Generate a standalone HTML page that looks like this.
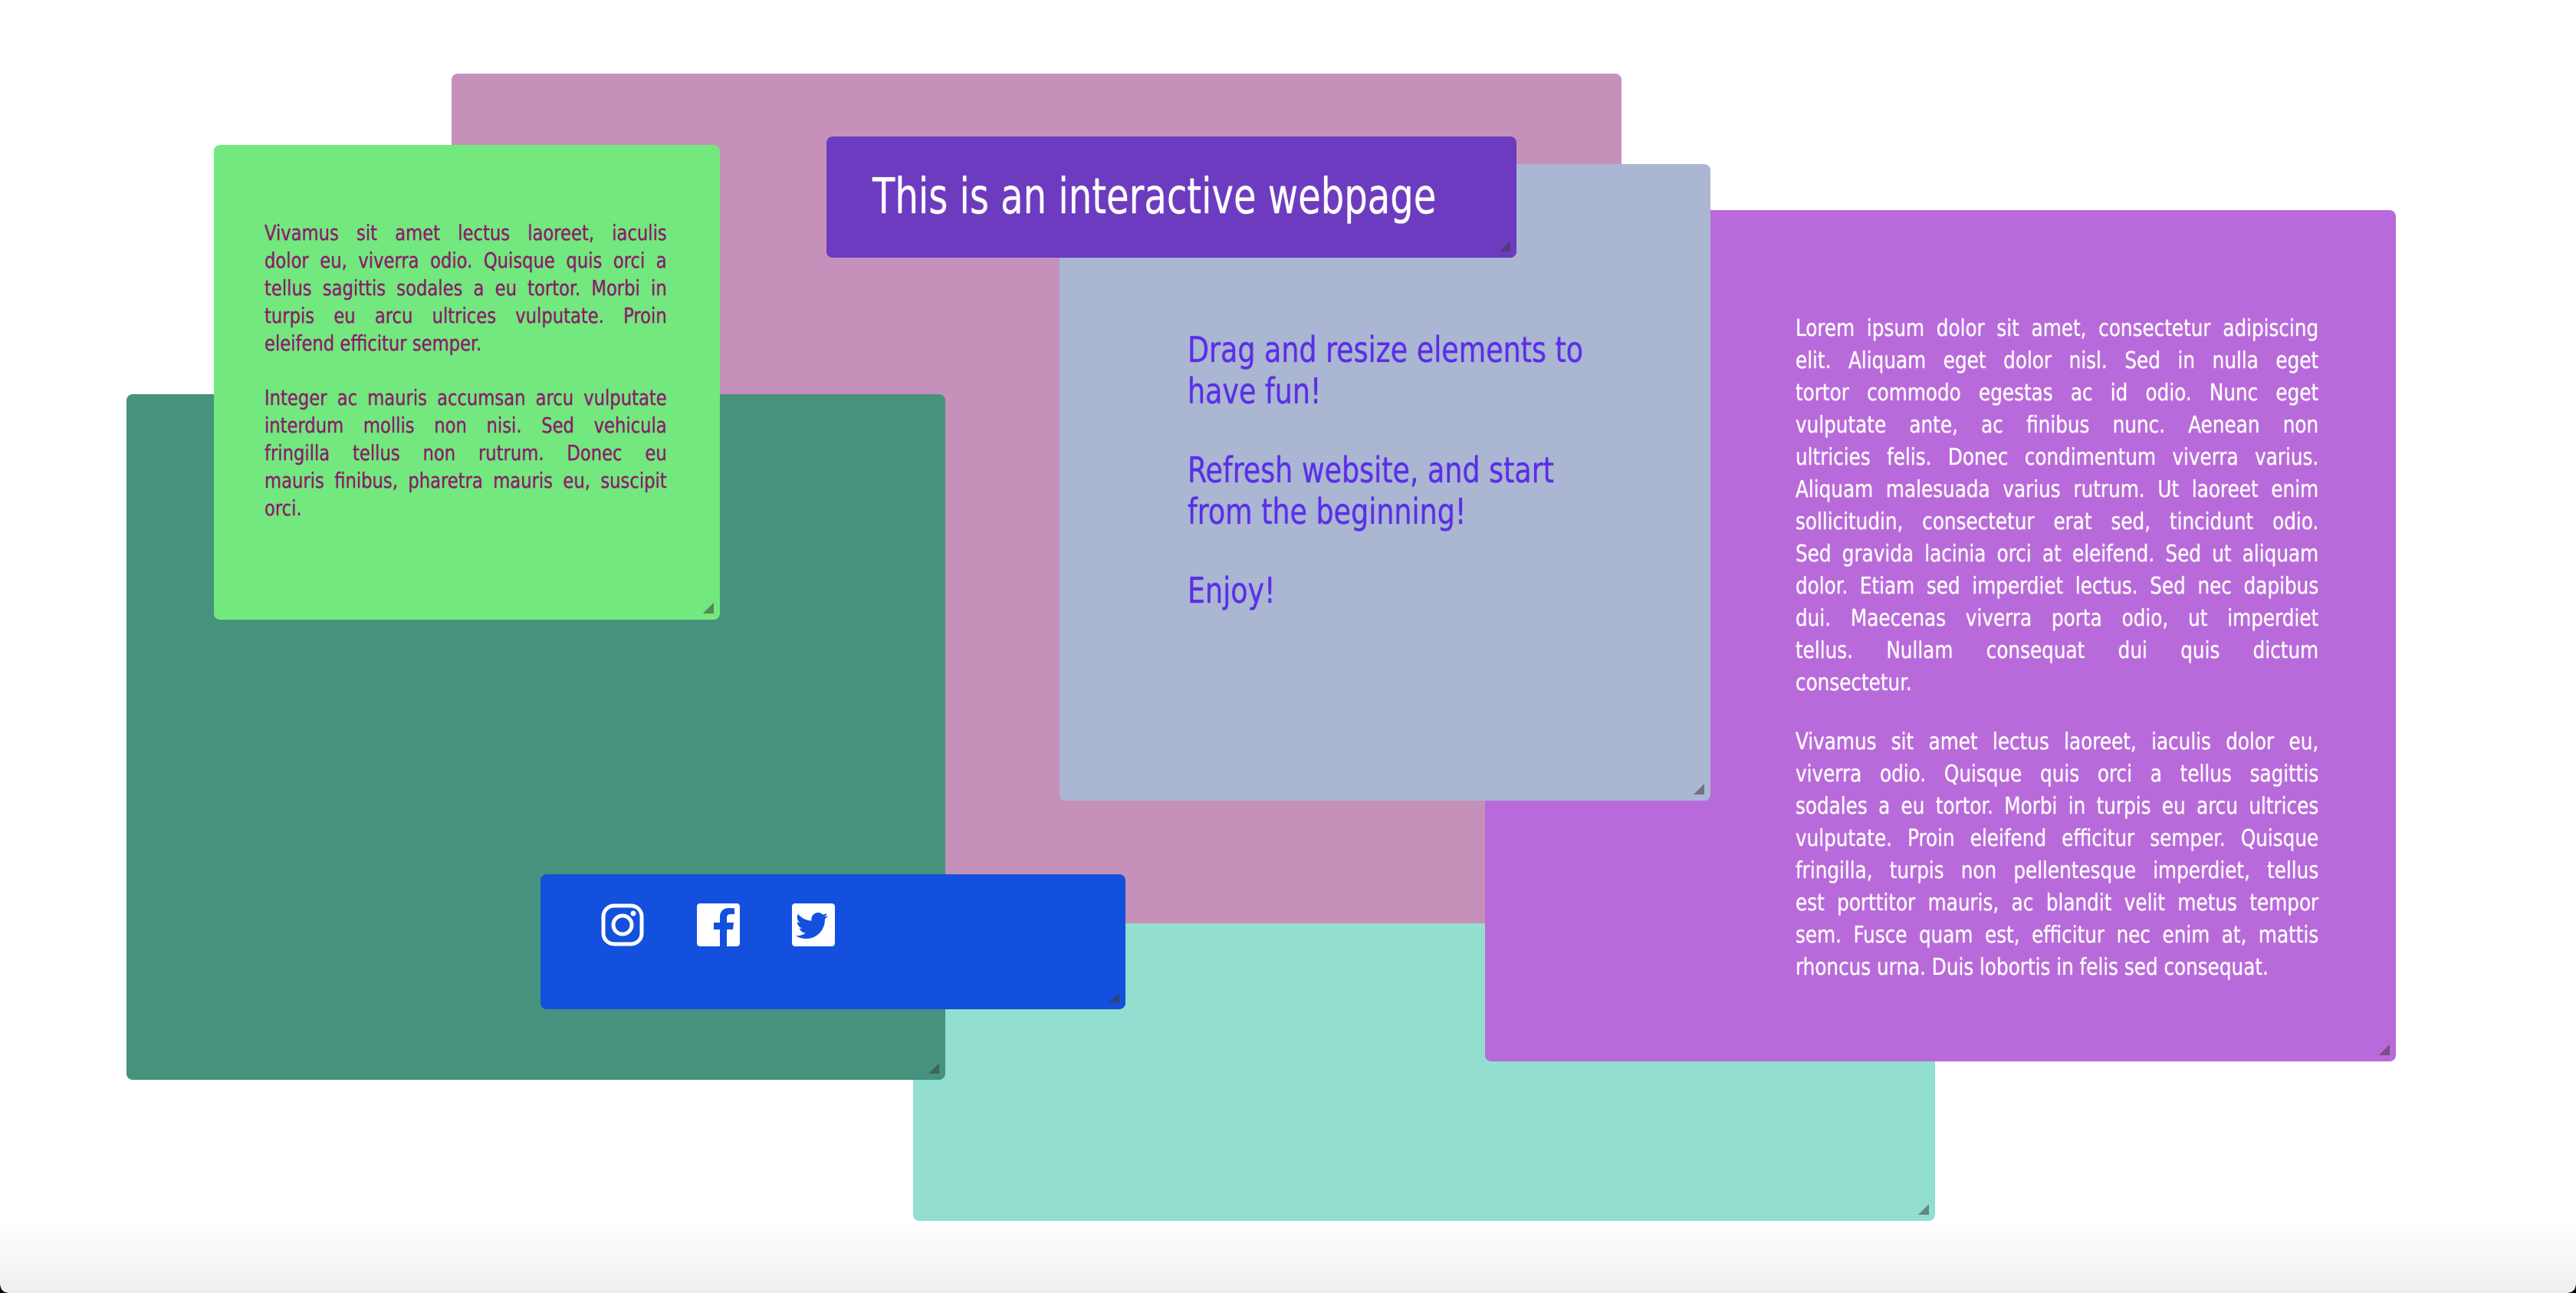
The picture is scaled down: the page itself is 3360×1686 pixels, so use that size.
<!DOCTYPE html>
<html><head><meta charset="utf-8">
<style>
html,body{margin:0;padding:0;width:3360px;height:1686px;overflow:hidden;}
body{background:#fff;position:relative;font-family:"Liberation Sans Narrow","DejaVu Sans Condensed","Liberation Sans",sans-serif;}
.b{position:absolute;border-radius:8px;}
.h{position:absolute;right:8px;bottom:8px;width:14px;height:14px;background:linear-gradient(135deg,transparent 50%,rgba(60,60,60,.55) 50%);}
.j{transform-origin:0 0;}
.j div{white-space:nowrap;text-align:justify;text-align-last:justify;}
.j div.l{text-align-last:left;}
</style></head><body>
<div style="position:absolute;left:0;top:1596px;width:3360px;height:90px;background:linear-gradient(to bottom,rgba(0,0,0,0),rgba(0,0,0,.065));"></div>
<div style="position:absolute;left:0;top:1676px;width:10px;height:10px;background:radial-gradient(circle at 100% 0,transparent 9px,#000 10px);"></div>
<div style="position:absolute;right:0;top:1676px;width:10px;height:10px;background:radial-gradient(circle at 0 0,transparent 9px,#000 10px);"></div>
<div class="b" style="left:589px;top:96px;width:1526px;height:1110px;background:#c591bb;"><div class="h"></div></div>
<div class="b" style="left:1191px;top:1204px;width:1333px;height:388px;background:#93dfcf;"><div class="h"></div></div>
<div class="b" style="left:165px;top:514px;width:1068px;height:894px;background:#46927c;"><div class="h"></div></div>
<div class="b" style="left:279px;top:189px;width:660px;height:619px;background:#72e87e;"><div class="h"></div>
 <div class="j" style="position:absolute;left:66px;top:97px;width:583px;transform:scaleX(.9);font-size:28px;line-height:36px;color:#8b1a6a;text-shadow:0 0 1px #8b1a6a;">
  <div>Vivamus sit amet lectus laoreet, iaculis</div><div>dolor eu, viverra odio. Quisque quis orci a</div><div>tellus sagittis sodales a eu tortor. Morbi in</div><div>turpis eu arcu ultrices vulputate. Proin</div><div class="l">eleifend efficitur semper.</div>
  <div style="margin-top:35px">Integer ac mauris accumsan arcu vulputate</div><div>interdum mollis non nisi. Sed vehicula</div><div>fringilla tellus non rutrum. Donec eu</div><div>mauris finibus, pharetra mauris eu, suscipit</div><div class="l">orci.</div>
 </div>
</div>
<div class="b" style="left:705px;top:1140px;width:763px;height:176px;background:#1350dd;"><div class="h"></div>
 <svg style="position:absolute;left:79px;top:38px" width="56" height="56" viewBox="0 0 56 56"><rect x="3" y="3" width="50" height="50" rx="14" fill="none" stroke="#fff" stroke-width="5"/><circle cx="28" cy="28" r="12" fill="none" stroke="#fff" stroke-width="5"/><circle cx="42" cy="13" r="3.5" fill="#fff"/></svg>
 <svg style="position:absolute;left:204px;top:38px" width="56" height="56" viewBox="0 0 56 56"><rect x="0" y="0" width="56" height="56" rx="4" fill="#fff"/><path d="M30 56V34h-8v-9h8v-7c0-8 5-12 12-12 3 0 6 .3 7 .4V14h-5c-4 0-5 2-5 5v6h9l-1 9h-8v22z" fill="#1350dd"/></svg>
 <svg style="position:absolute;left:328px;top:38px" width="56" height="56" viewBox="0 0 56 56"><rect x="0" y="0" width="56" height="56" rx="4" fill="#fff"/><path d="M47 16c-1.6.7-3.2 1.1-4.9 1.3 1.8-1 3.1-2.7 3.7-4.7-1.7 1-3.5 1.7-5.4 2.1-3.3-3.5-8.9-3.6-12.3-.3-2.2 2.1-3.2 5.2-2.5 8.2-6.9-.3-13.3-3.6-17.7-8.9-2.3 3.9-1.1 8.9 2.7 11.4-1.4 0-2.7-.4-3.9-1.1 0 4.1 2.9 7.6 6.9 8.4-1.3.3-2.6.4-3.9.1 1.1 3.5 4.3 5.9 8 6-3.6 2.8-8.3 4.1-12.8 3.6 4 2.5 8.6 3.9 13.3 3.9 16 0 24.8-13.3 24.8-24.8v-1.1c1.7-1.2 3.1-2.7 4.3-4.4z" fill="#1350dd"/></svg>
</div>
<div class="b" style="left:1937px;top:274px;width:1188px;height:1110px;background:#b96ada;"><div class="h"></div>
 <div class="j" style="position:absolute;left:405px;top:134px;width:758px;transform:scaleX(.9);font-size:30.5px;line-height:42px;color:#fff;text-shadow:0 0 1px #fff;">
  <div>Lorem ipsum dolor sit amet, consectetur adipiscing</div><div>elit. Aliquam eget dolor nisl. Sed in nulla eget</div><div>tortor commodo egestas ac id odio. Nunc eget</div><div>vulputate ante, ac finibus nunc. Aenean non</div><div>ultricies felis. Donec condimentum viverra varius.</div><div>Aliquam malesuada varius rutrum. Ut laoreet enim</div><div>sollicitudin, consectetur erat sed, tincidunt odio.</div><div>Sed gravida lacinia orci at eleifend. Sed ut aliquam</div><div>dolor. Etiam sed imperdiet lectus. Sed nec dapibus</div><div>dui. Maecenas viverra porta odio, ut imperdiet</div><div>tellus. Nullam consequat dui quis dictum</div><div class="l">consectetur.</div>
  <div style="margin-top:35px">Vivamus sit amet lectus laoreet, iaculis dolor eu,</div><div>viverra odio. Quisque quis orci a tellus sagittis</div><div>sodales a eu tortor. Morbi in turpis eu arcu ultrices</div><div>vulputate. Proin eleifend efficitur semper. Quisque</div><div>fringilla, turpis non pellentesque imperdiet, tellus</div><div>est porttitor mauris, ac blandit velit metus tempor</div><div>sem. Fusce quam est, efficitur nec enim at, mattis</div><div class="l">rhoncus urna. Duis lobortis in felis sed consequat.</div>
 </div>
</div>
<div class="b" style="left:1382px;top:214px;width:849px;height:830px;background:#abb6d2;"><div class="h"></div>
 <div style="position:absolute;left:167px;top:215px;font-size:46px;line-height:54px;color:#5a2ee8;white-space:nowrap;transform:scaleX(.88);transform-origin:0 0;text-shadow:0 0 1px #5a2ee8;">
  <div>Drag and resize elements to<br>have fun!</div>
  <div style="margin-top:49px">Refresh website, and start<br>from the beginning!</div>
  <div style="margin-top:49px">Enjoy!</div>
 </div>
</div>
<div class="b" style="left:1078px;top:178px;width:900px;height:158px;background:#6c3bbf;"><div class="h"></div>
 <div style="position:absolute;left:60px;top:42px;font-size:64px;line-height:74px;color:#fff;white-space:nowrap;transform:scaleX(.835);transform-origin:0 0;text-shadow:0 0 1px #fff;">This is an interactive webpage</div>
</div>
</body></html>
